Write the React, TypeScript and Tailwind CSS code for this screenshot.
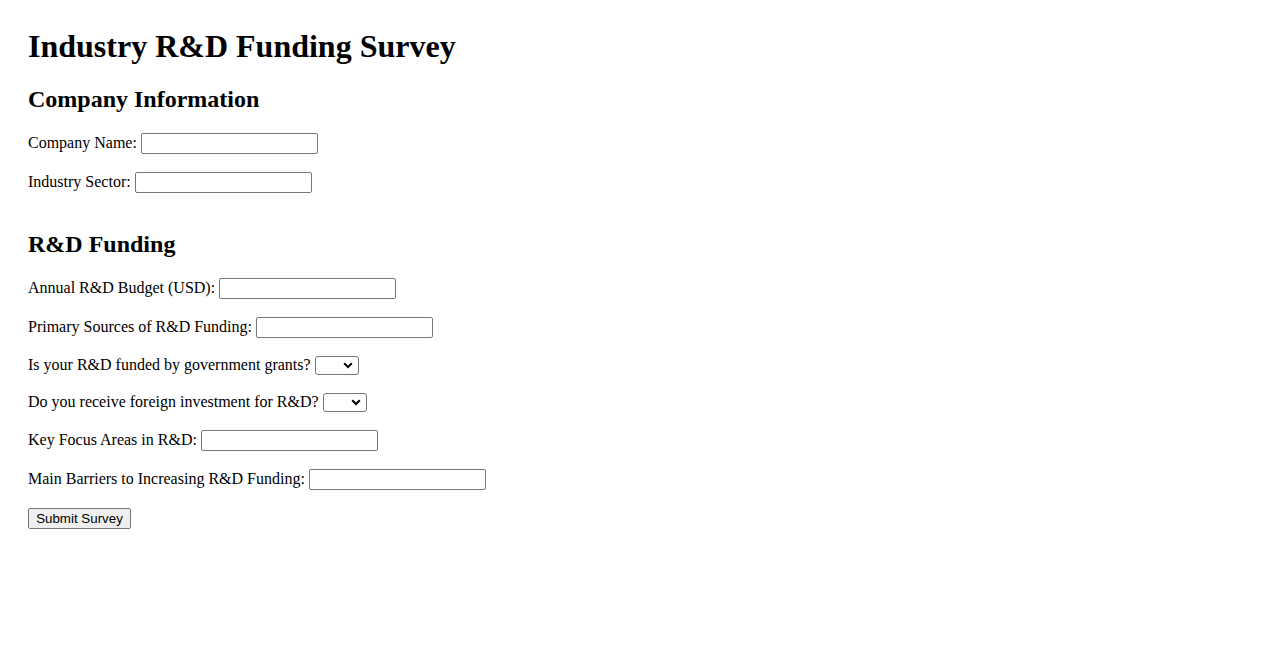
import React from "react";

const serif = "font-['Liberation_Serif','Times_New_Roman',serif]";

function TextRow({ label }: { label: string }) {
  return (
    <div className="flex h-[21px] items-center gap-[4px] text-[16px] leading-[18px]">
      <label className="whitespace-pre pb-[2px]">{label}</label>
      <input
        type="text"
        className="box-border h-[21px] w-[177px] rounded-[2px] border border-[#767676] bg-white px-[2px] text-[13.33px] outline-none"
      />
    </div>
  );
}

function SelectRow({ label }: { label: string }) {
  return (
    <div className="flex h-[19px] items-center gap-[4px] text-[16px] leading-[18px]">
      <label className="whitespace-pre pb-[2px]">{label}</label>
      <div className="relative h-[19px] w-[44px]">
        <select className="box-border h-[19px] w-[44px] appearance-none rounded-[3px] border border-[#767676] bg-white text-[13.33px] outline-none">
          <option value=""></option>
          <option value="yes">Yes</option>
          <option value="no">No</option>
        </select>
        <svg
          className="pointer-events-none absolute right-[6px] top-[6px]"
          width="10"
          height="7"
          viewBox="0 0 10 7"
        >
          <path d="M1.2 1.3 L5 5 L8.8 1.3" fill="none" stroke="#000" strokeWidth="2" />
        </svg>
      </div>
    </div>
  );
}

export default function App() {
  return (
    <div className={`min-h-[650px] w-full bg-white pl-[28px] pt-[28px] text-black ${serif}`}>
      <h1 className="m-0 text-[32px] font-bold leading-[37px]">Industry R&amp;D Funding Survey</h1>
      <h2 className="mt-[20px] text-[24px] font-bold leading-[28px]">Company Information</h2>
      <div className="mt-[20px] flex flex-col gap-[18px]">
        <TextRow label="Company Name:" />
        <TextRow label="Industry Sector:" />
      </div>
      <h2 className="mt-[37px] text-[24px] font-bold leading-[28px]">R&amp;D Funding</h2>
      <div className="mt-[20px] flex flex-col items-start gap-[18px]">
        <TextRow label="Annual R&D Budget (USD):" />
        <TextRow label="Primary Sources of R&D Funding:" />
        <SelectRow label="Is your R&D funded by government grants?" />
        <SelectRow label="Do you receive foreign investment for R&D?" />
        <TextRow label="Key Focus Areas in R&D:" />
        <TextRow label="Main Barriers to Increasing R&D Funding:" />
        <button
          type="button"
          className="box-border h-[21px] w-[103px] rounded-[2px] border border-[#767676] bg-[#efefef] font-['Liberation_Sans',Arial,sans-serif] text-[13.33px] leading-[15px] text-black"
        >
          Submit Survey
        </button>
      </div>
    </div>
  );
}
